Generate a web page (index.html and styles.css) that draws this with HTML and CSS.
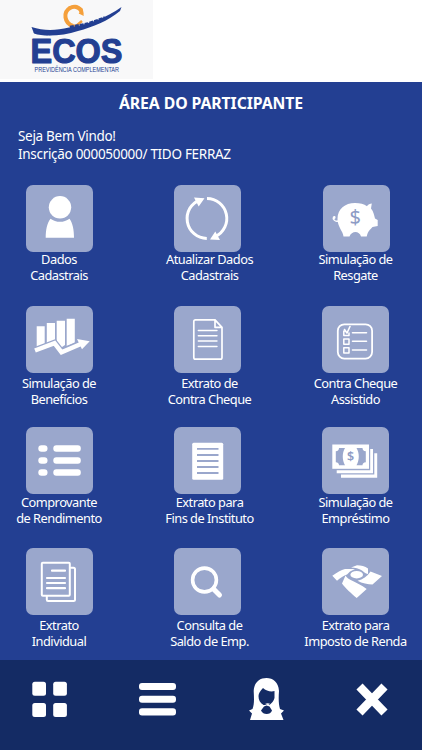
FILE: index.html
```
<!DOCTYPE html>
<html lang="pt-BR">
<head>
    <meta charset="utf-8">
    <title>ECOS - Área do Participante</title>
    <link rel="stylesheet" href="styles.css">
</head>
<body>
    <header class="header">
        <svg class="logo" viewBox="0 0 153 79">
            <path d="M73 26C64 23 63 12 70 8C75 5 82 8 81.500 14" fill="none" stroke="#f5a03c" stroke-width="4"/>
            <path d="M65 14L69 7L76 5.500L82 9L83 15L79 13" fill="none" stroke="#f5a03c" stroke-width="1.200"/>
            <path d="M69 25L76 26L82 21" fill="none" stroke="#f5a03c" stroke-width="2.500"/>
            <path d="M31.500 27C44 31 56 30.500 69 27.500C87 25 106 18 121.500 7L120 11C108 21 93 27 78 31C63 36 44 37 34 33.500Z" fill="#233f92"/>
            <path d="M34 31L40 32L47 33.500L55 33L64 31M70 27.500L78 26L88 24L97 21L105 18" fill="none" stroke="#233f92" stroke-width="3.500" stroke-dasharray="4 1"/>
            <text class="logo-name" x="30.500" y="63.300" textLength="92" lengthAdjust="spacingAndGlyphs">ECOS</text>
            <text class="logo-sub" x="34.500" y="72" textLength="84.500" lengthAdjust="spacingAndGlyphs">PREVIDÊNCIA COMPLEMENTAR</text>
        </svg>
    </header>

    <main class="content">
        <h1>ÁREA DO PARTICIPANTE</h1>
        <p class="welcome">Seja Bem Vindo!<br>Inscrição 000050000/ TIDO FERRAZ</p>

        <div class="menu">
            <a class="item">
                <svg class="tile" viewBox="0 0 67 67">
                    <circle cx="34" cy="22.300" r="11.200"/>
                    <path d="M24.500 33.700C30 37.800 38 37.800 43.500 33.700C46.800 38 48 45 48 52.800H19.700C19.700 45 21 38 24.500 33.700Z"/>
                </svg>
                <span>Dados<br>Cadastrais</span>
            </a>
            <a class="item middle">
                <svg class="tile" viewBox="0 0 67 67">
                    <path class="line thick" d="M32.800 53.500A20 20 0 0 1 26 14.800M33 13.500A20 20 0 0 1 41.500 51.500"/>
                    <path d="M20 12.500L30.500 13.300L24.700 21.500ZM36 54.500L46 55L41.300 46.500Z"/>
                </svg>
                <span>Atualizar Dados<br>Cadastrais</span>
            </a>
            <a class="item first-right">
                <svg class="tile" viewBox="0 0 67 67">
                    <path d="M14.500 34C14.500 24 22 18 32 18C37 18 41 19 44 21.200C45 19.500 47 18.700 48.800 18.500L48 23.500C50.500 26 51 30 52 33.500L54.700 35V41L49.500 42C47 45 45 46 43.700 51.500H38C36.500 45.500 28.500 45.500 26.500 51.500H20.500C20 46 14.500 42 14.500 34Z"/>
                    <path class="line thin" d="M15 36C12 37 9.500 34 10.500 32C12 31 12.500 33 11 33.500"/>
                    <text class="dollar" x="32.300" y="38.700" font-size="20">$</text>
                </svg>
                <span>Simulação de<br>Resgate</span>
            </a>

            <a class="item low">
                <svg class="tile" viewBox="0 0 67 67">
                    <path d="M10.700 20.300H18.700V38L10.700 41ZM20.800 17H29V36L20.800 37.500ZM30.700 14.700H39V39L34.500 42L30.700 37ZM40.700 12.800H48.800V37L40.700 40Z"/>
                    <path class="gap" d="M9 44.500L28.500 37.200L35.500 46.200L55 37.500" stroke-width="7"/>
                    <path class="line sharp" d="M9 44.500L28.500 37.200L35.500 46.200L56 37.500" stroke-width="4.500"/>
                    <path d="M51 33L63.700 35.300L56 43.300Z"/>
                </svg>
                <span>Simulação de<br>Benefícios</span>
            </a>
            <a class="item middle low">
                <svg class="tile" viewBox="0 0 67 67">
                    <path class="line" d="M41 13.800H21.500Q19.800 13.800 19.800 15.500V51.500Q19.800 53.200 21.500 53.200H46.300Q48 53.200 48 51.500V21.300L41 13.800V21.300H48" stroke-width="1.700"/>
                    <path class="line thin" d="M24.300 24.500H43M24.300 29.800H43M24.300 35H43M24.300 40.500H43"/>
                </svg>
                <span>Extrato de<br>Contra Cheque</span>
            </a>
            <a class="item low">
                <svg class="tile" viewBox="0 0 67 67">
                    <rect class="line" x="15.800" y="18.300" width="34.300" height="34.300" rx="6.500" stroke-width="1.800"/>
                    <path class="line" d="M27 27V29.500H21.800V25H23M21.800 33H27V38.300H21.800ZM21.800 41.700H27V47H21.800Z" stroke-width="1.500"/>
                    <path class="line" d="M22.500 23.500L25 27L28 20.500M30.500 26.700H44.500M30.500 35.300H44.500M30.500 44H44.500" stroke-width="1.600"/>
                </svg>
                <span>Contra Cheque<br>Assistido</span>
            </a>

            <a class="item mid-low">
                <svg class="tile" viewBox="0 0 67 67">
                    <rect x="12.300" y="18.300" width="9.200" height="6.400" rx="3.200"/>
                    <rect x="12.300" y="30.300" width="9.200" height="6.400" rx="3.200"/>
                    <rect x="12.300" y="42.300" width="9.200" height="6.400" rx="3.200"/>
                    <rect x="27.300" y="18.300" width="27.500" height="6.400" rx="3"/>
                    <rect x="27.300" y="30.300" width="27.500" height="6.400" rx="3"/>
                    <rect x="27.300" y="42.300" width="27.500" height="6.400" rx="3"/>
                </svg>
                <span>Comprovante<br>de Rendimento</span>
            </a>
            <a class="item middle mid-low">
                <svg class="tile" viewBox="0 0 67 67">
                    <rect x="18.200" y="15.700" width="31" height="37" rx="1.500"/>
                    <path class="gap" d="M23 21.800H44.500M23 28H44.500M23 34H44.500M23 40H44.500M23 46H44.500" stroke-width="1.800"/>
                </svg>
                <span>Extrato para<br>Fins de Instituto</span>
            </a>
            <a class="item mid-low">
                <svg class="tile" viewBox="0 0 67 67">
                    <rect x="10.300" y="17.500" width="36.700" height="24.300"/>
                    <path class="cut" d="M17 21H23C20 26 20 33 23 38.300H17C17 36.500 16 35.500 13.800 35.300V24.300C16 24 17 23 17 21ZM34.500 21H40.500C40.500 23 41.500 24 43.800 24.300V35.300C41.500 35.500 40.500 36.500 40.500 38.300H34.500C37.500 33 37.500 26 34.500 21Z"/>
                    <text class="bill-dollar" x="28.700" y="34" font-size="12.500">$</text>
                    <path d="M14.700 43.200H48.200V22H51V46.200H14.700ZM19 47.500H52.300V26.300H55.200V50.700H19Z"/>
                </svg>
                <span>Simulação de<br>Empréstimo</span>
            </a>

            <a class="item low">
                <svg class="tile" viewBox="0 0 67 67">
                    <rect class="line" x="15.800" y="14.800" width="28" height="33" rx="1" stroke-width="2"/>
                    <path class="line" d="M45 19.800H47.500Q49 19.800 49 21.300V51.500Q49 53 47.500 53H22Q20.800 53 20.800 51.500V48" stroke-width="2"/>
                    <path class="line" d="M26 22.700H39M21 30H39M21 35H39M21 40.200H39" stroke-width="2.200"/>
                </svg>
                <span>Extrato<br>Individual</span>
            </a>
            <a class="item middle low">
                <svg class="tile" viewBox="0 0 67 67">
                    <circle class="line" cx="30.500" cy="32" r="11.900" stroke-width="3.600"/>
                    <path class="line" d="M39.500 41L45.500 47" stroke-width="5"/>
                </svg>
                <span>Consulta de<br>Saldo de Emp.</span>
            </a>
            <a class="item low">
                <svg class="tile" viewBox="0 0 67 67">
                    <path d="M10.300 27.700C15 24.500 19 22 23 21H33L28 23.500L25 26.500C22 27.500 18 30 15 32.700Z"/>
                    <path d="M29 19.500L35 17.300C39 17.300 43 18.500 46 20.500V26C43 25.500 42.500 24.500 40 22.500C37 20.500 33 19.500 29 19.500Z"/>
                    <ellipse cx="34.700" cy="26.700" rx="6.300" ry="3.700"/>
                    <path d="M48.500 23.500L60 28L50.500 36.500C46 36.500 40 35.500 35.500 32.800C41 31.500 45 28.500 48.500 23.500Z"/>
                    <path d="M23.500 27.500C25.500 32 34 33 44.700 41L34.700 50C30 46 23 40 20 35.500Z"/>
                </svg>
                <span>Extrato para<br>Imposto de Renda</span>
            </a>
        </div>
    </main>

    <nav class="bottom-bar">
        <svg width="35" height="42" viewBox="0 0 35 42">
            <rect x="0.300" y="3.700" width="13.700" height="14" rx="2.500"/>
            <rect x="21.200" y="3.700" width="13.700" height="14" rx="2.500"/>
            <rect x="0.300" y="24.900" width="13.700" height="14" rx="2.500"/>
            <rect x="21.200" y="24.900" width="13.700" height="14" rx="2.500"/>
        </svg>
        <svg width="37" height="42" viewBox="0 0 37 42">
            <rect y="5" width="37" height="7" rx="3"/>
            <rect y="17.700" width="37" height="7" rx="3"/>
            <rect y="30.200" width="37" height="7.200" rx="3"/>
        </svg>
        <svg width="35" height="42" viewBox="0 0 35 42">
            <path d="M4.700 13C5 4 11 0 17.500 0C24 0 29.500 4 30 13C29.500 20 29.500 26 31 31L35 32.500L32 35.500L34.500 42H1L3 35.500L0 32.500L3.500 31C5.500 26 5 20 4.700 13Z"/>
            <path class="face" d="M9.500 18C9.500 15 11.500 13 14 10C17 13 22 14 25.500 13V20C25 23 22.500 25 20.500 27H14.500C11 25 9.500 22 9.500 18Z"/>
            <path class="face" d="M15 28.500L17.500 27.500L20.500 28.500L23 32.500C21.500 37.300 14 37.300 12 32.500Z"/>
            <path d="M16 26Q18.500 24.500 21 25.700Q19.500 28.300 16 26Z"/>
        </svg>
        <svg width="32" height="42" viewBox="0 0 32 42">
            <path d="M3.500 8.500L28.500 34.500M28.500 8.500L3.500 34.500" stroke="#fff" stroke-width="8.500"/>
        </svg>
    </nav>
</body>
</html>
```
FILE: styles.css
```
body {
    margin: 0;
    height: 750px;
    display: flex;
    flex-direction: column;
    overflow: hidden;
    background-color: #233f92;
    color: #fff;
    font-family: "Noto Sans", "Open Sans", sans-serif;
}
.header {
    height: 82px;
    background-color: #fff;
}
.logo {
    display: block;
    width: 153px;
    height: 79px;
    background-color: #f8f8f9;
}
.logo-name {
    font: bold 35px "Liberation Sans", sans-serif;
    fill: #233f92;
    stroke: #233f92;
    stroke-width: 1.2px;
    stroke-linejoin: round;
}
.logo-sub {
    font: 6.5px "Liberation Sans", sans-serif;
    fill: #233f92;
}
.content {
    height: 578px;
}
h1 {
    margin: 0;
    padding-top: 10px;
    font-size: 15.8px;
    line-height: 22px;
    letter-spacing: -0.1px;
    text-align: center;
}
.welcome {
    margin: 13px 0 0 18px;
    font-size: 13.5px;
    line-height: 18px;
    letter-spacing: -0.3px;
}

/* Menu grid */
.menu {
    margin-top: 22px;
    display: grid;
    grid-template-columns: 118px 178px 119px;
    grid-auto-rows: 121px;
}
.item {
    display: flex;
    flex-direction: column;
    align-items: center;
    font-size: 12.8px;
    line-height: 16px;
    letter-spacing: -0.5px;
    text-align: center;
    white-space: nowrap;
}
.item span {
    margin-top: -1px;
}
.middle span {
    padding-left: 5px;
}
.low span {
    padding-top: 3px;
}
.mid-low span {
    padding-top: 1px;
}
.first-right .tile {
    margin-left: 2px;
}
.tile {
    width: 67px;
    height: 67px;
    border-radius: 7px;
    background-color: #9aa7cc;
    fill: #fff;
}
.line {
    fill: none;
    stroke: #fff;
    stroke-linecap: round;
    stroke-linejoin: round;
}
.thick {
    stroke-width: 3px;
    stroke-linecap: butt;
}
.thin {
    stroke-width: 1.4px;
}
.sharp {
    stroke-linecap: butt;
    stroke-linejoin: miter;
}
.gap {
    fill: none;
    stroke: #9aa7cc;
}
.cut {
    fill: #9aa7cc;
}
.dollar,
.bill-dollar {
    fill: #8d9bc5;
    text-anchor: middle;
    letter-spacing: 0;
}
.bill-dollar {
    font-weight: 600;
}

/* Bottom bar */
.bottom-bar {
    height: 72px;
    padding: 18px 34px 0 32px;
    display: flex;
    justify-content: space-between;
    align-items: flex-start;
    background-color: #142b64;
}
.bottom-bar svg {
    fill: #fff;
}
.bottom-bar .face {
    fill: #142b64;
}
```
